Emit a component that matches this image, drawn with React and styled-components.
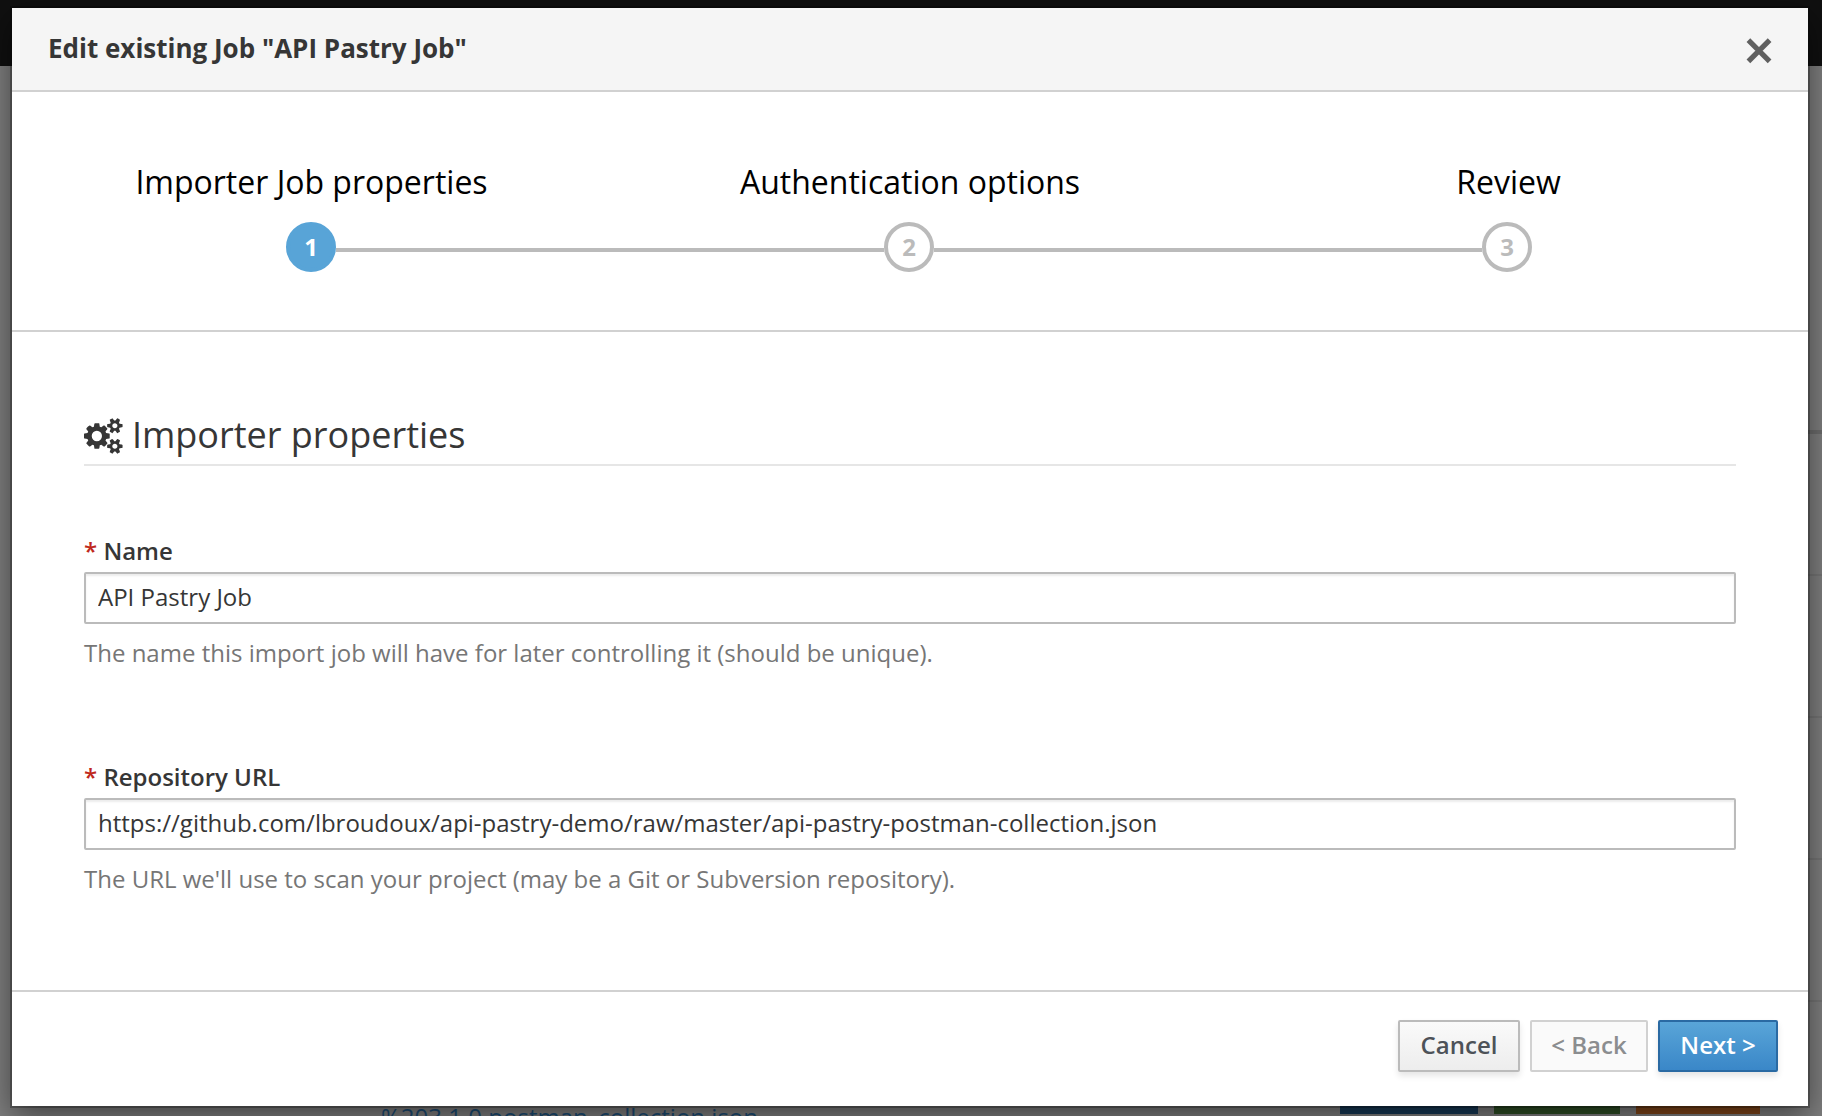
import React from "react";
import styled, { createGlobalStyle } from "styled-components";

const Global = createGlobalStyle`
  *, *::before, *::after { box-sizing: border-box; }
  body {
    margin: 0;
    overflow: hidden;
    background: #7e7e7e;
    font-family: "Open Sans", "Liberation Sans", sans-serif;
    font-size: 24px;
    line-height: 40px;
    color: #363636;
  }
`;

const Page = styled.div`
  position: relative;
  width: 1822px;
  height: 1116px;
  overflow: hidden;
  display: flex;
  flex-direction: column;
`;

const NavBar = styled.div`
  flex: none;
  height: 66px;
  background: #101010;
`;

const ListTop = styled.div`
  flex: none;
  height: 368px;
  margin-left: 40px;
  border-bottom: 4px solid #6c6c6c;
`;

const ListRow = styled.div`
  flex: none;
  height: 142px;
  margin-left: 40px;
  border-bottom: 2px solid #747474;
`;

const LastRow = styled.div`
  flex: 1;
  display: flex;
  align-items: flex-end;
`;

const FileLink = styled.div`
  flex: none;
  width: 1340px;
  height: 17px;
  padding-left: 381px;
  line-height: 36px;
  color: #1b4c74;
`;

const RowAction = styled.div`
  flex: none;
  width: ${(p) => p.$width}px;
  height: 40px;
  margin: 0 16px 2px 0;
  background: ${(p) => p.$color};
`;

const Dialog = styled.div`
  position: absolute;
  left: 12px;
  top: 8px;
  width: 1796px;
  height: 1098px;
  display: flex;
  flex-direction: column;
  background: #fff;
  box-shadow: 0 0 0 2px rgba(0, 0, 0, 0.25), 0 10px 30px rgba(0, 0, 0, 0.5);
`;

const Header = styled.div`
  flex: none;
  display: flex;
  justify-content: space-between;
  height: 84px;
  padding: 20px 36px 0;
  background: #f5f5f5;
  border-bottom: 2px solid #d1d1d1;
`;

const Title = styled.h4`
  margin: 0;
  font-size: 26px;
  font-weight: 700;
  line-height: 40px;
`;

const CloseIcon = styled.svg`
  width: 26px;
  height: 26px;
  margin-top: 10px;
`;

const Steps = styled.ul`
  flex: none;
  display: flex;
  height: 240px;
  margin: 0;
  padding: 66px 2px 0 0;
  list-style: none;
  border-bottom: 2px solid #d1d1d1;
`;

const Step = styled.li`
  flex: 1;
  display: flex;
  flex-direction: column;
  align-items: center;
`;

const StepTitle = styled.div`
  height: 64px;
  padding-left: ${(p) => p.$nudge}px;
  font-size: 32px;
  line-height: 48px;
  color: #000;
`;

const Track = styled.div`
  align-self: stretch;
  display: flex;
  align-items: center;
`;

const Rail = styled.div`
  flex: 1;
  height: 4px;
  margin-top: 6px;
  background: ${(p) => (p.$on ? "#bbb" : "transparent")};
`;

const Bubble = styled.div`
  width: 50px;
  height: 50px;
  border: 4px solid ${(p) => (p.$active ? "#58a4d7" : "#bbb")};
  border-radius: 50%;
  background: ${(p) => (p.$active ? "#58a4d7" : "#fff")};
  color: ${(p) => (p.$active ? "#fff" : "#bbb")};
  font-weight: 700;
  line-height: 42px;
  text-align: center;
`;

const Body = styled.div`
  flex: 1;
  padding: 76px 72px 0;
`;

const Heading = styled.h2`
  display: flex;
  align-items: center;
  height: 58px;
  margin: 0 0 65px;
  padding-bottom: 2px;
  font-size: 36px;
  font-weight: 400;
  line-height: 54px;
  border-bottom: 2px solid #e6e6e6;
`;

const GearsIcon = styled.svg`
  width: 38.57px;
  height: 36px;
  margin: 2px 9.4px 0 0;
  fill: currentColor;
`;

const Field = styled.div`
  height: 226px;
`;

const Label = styled.label`
  display: block;
  height: 41px;
  font-weight: 600;
`;

const Required = styled.span`
  color: #c0281c;
`;

const Input = styled.input`
  display: block;
  width: 100%;
  height: 52px;
  padding: 0 12px 4px;
  border: 2px solid #bbb;
  border-radius: 2px;
  box-shadow: inset 0 2px 2px rgba(3, 3, 3, 0.075);
  background: #fff;
  font: inherit;
  color: #363636;
  outline: none;
`;

const Help = styled.div`
  margin-top: 9px;
  color: #767676;
`;

const Footer = styled.div`
  flex: none;
  display: flex;
  justify-content: flex-end;
  gap: 10px;
  height: 116px;
  padding: 28px 30px 0;
  border-top: 2px solid #d1d1d1;
`;

const variants = {
  normal: `
    width: 122px;
    color: #4d5258;
    border-color: #bbb;
    background: linear-gradient(#fafafa, #ededed);
    box-shadow: 0 4px 6px rgba(3, 3, 3, 0.1);
  `,
  disabled: `
    width: 118px;
    color: #8b8d8f;
    border-color: #d1d1d1;
    background: #fafafa;
  `,
  primary: `
    width: 120px;
    color: #fff;
    border-color: #2a6aa3;
    background: linear-gradient(#59a5d8, #3a87c8);
    box-shadow: 0 4px 6px rgba(3, 3, 3, 0.1);
  `,
};

const Button = styled.button`
  height: 52px;
  padding: 0 0 3px;
  border: 2px solid;
  border-radius: 2px;
  font: 600 24px "Open Sans", "Liberation Sans", sans-serif;
  white-space: nowrap;
  ${(p) => variants[p.$kind]}
`;

const gear =
  "v140q0 16-149 31-12 27-30 52 51 113 51 138 0 4-4 7-122 71-124 71-8 0-46-47t-52-68q-20 2-30 2t-30-2q-14 21-52 68t-46 47q-2 0-124-71-4-3-4-7 0-25 51-138-18-25-30-52-149-15-149-31v-140q0-16 149-31 13-29 30-52-51-113-51-138 0-4 4-7 4-2 35-20t59-34 30-16q8 0 46 46.5t52 67.5q20-2 30-2t30 2q51-71 92-112l6-2q4 0 124 70 4 3 4 7 0 25-51 138 17 23 30 52 149 15 149 31z";

const gears =
  "M896 896q0-106-75-181t-181-75-181 75-75 181 75 181 181 75 181-75 75-181zm768 512q0-52-38-90t-90-38-90 38-38 90q0 53 37.5 90.5t90.5 37.5 90.5-37.5 37.5-90.5zm0-1024q0-52-38-90t-90-38-90 38-38 90q0 53 37.5 90.5t90.5 37.5 90.5-37.5 37.5-90.5zm-384 421v185q0 10-7 19.5t-16 10.5l-155 24q-11 35-32 76 34 48 90 115 7 11 7 20 0 12-7 19-23 30-82.5 89.5t-78.5 59.5q-11 0-21-7l-115-90q-37 19-77 31-11 108-23 155-7 24-30 24h-186q-11 0-20-7.5t-10-17.5l-23-153q-34-10-75-31l-118 89q-7 7-20 7-11 0-21-8-144-133-144-160 0-9 7-19 10-14 41-53t47-61q-23-44-35-82l-152-24q-10-1-17-9.5t-7-19.5v-185q0-10 7-19.5t16-10.5l155-24q11-35 32-76-34-48-90-115-7-11-7-20 0-12 7-20 22-30 82-89t79-59q11 0 21 7l115 90q34-18 77-32 11-108 23-154 7-24 30-24h186q11 0 20 7.5t10 17.5l23 153q34 10 75 31l118-89q8-7 20-7 11 0 21 8 144 133 144 160 0 8-7 19-12 16-42 54t-45 60q23 48 34 82l152 23q10 2 17 10.5t7 19.5z" +
  "M1920 1338" + gear + "M1920 314" + gear;

const steps = [
  { title: "Importer Job properties", nudge: 1 },
  { title: "Authentication options", nudge: 2 },
  { title: "Review", nudge: 3 },
];

const fields = [
  {
    label: "Name",
    value: "API Pastry Job",
    help: "The name this import job will have for later controlling it (should be unique).",
  },
  {
    label: "Repository URL",
    value: "https://github.com/lbroudoux/api-pastry-demo/raw/master/api-pastry-postman-collection.json",
    help: "The URL we'll use to scan your project (may be a Git or Subversion repository).",
  },
];

export default function App() {
  return (
    <Page>
      <Global />
      <NavBar />
      <ListTop />
      <ListRow />
      <ListRow />
      <ListRow />
      <ListRow />
      <LastRow>
        <FileLink>%203.1.0.postman_collection.json</FileLink>
        <RowAction $width={138} $color="#183a57" />
        <RowAction $width={126} $color="#2e4f25" />
        <RowAction $width={124} $color="#814619" />
      </LastRow>
      <Dialog role="dialog">
        <Header>
          <Title>Edit existing Job "API Pastry Job"</Title>
          <CloseIcon viewBox="0 0 26 26">
            <path d="M2.4 2.2L23.6 23.4M23.6 2.2L2.4 23.4" stroke="#606060" strokeWidth="5.2" />
          </CloseIcon>
        </Header>
        <Steps>
          {steps.map((step, i) => (
            <Step key={step.title}>
              <StepTitle $nudge={step.nudge}>{step.title}</StepTitle>
              <Track>
                <Rail $on={i > 0} />
                <Bubble $active={i === 0}>{i + 1}</Bubble>
                <Rail $on={i < steps.length - 1} />
              </Track>
            </Step>
          ))}
        </Steps>
        <Body>
          <Heading>
            <GearsIcon viewBox="0 0 1920 1792">
              <path d={gears} />
            </GearsIcon>
            Importer properties
          </Heading>
          {fields.map((f) => (
            <Field key={f.label}>
              <Label>
                <Required>*</Required> {f.label}
              </Label>
              <Input defaultValue={f.value} />
              <Help>{f.help}</Help>
            </Field>
          ))}
        </Body>
        <Footer>
          <Button $kind="normal">Cancel</Button>
          <Button $kind="disabled">&lt; Back</Button>
          <Button $kind="primary">Next &gt;</Button>
        </Footer>
      </Dialog>
    </Page>
  );
}
